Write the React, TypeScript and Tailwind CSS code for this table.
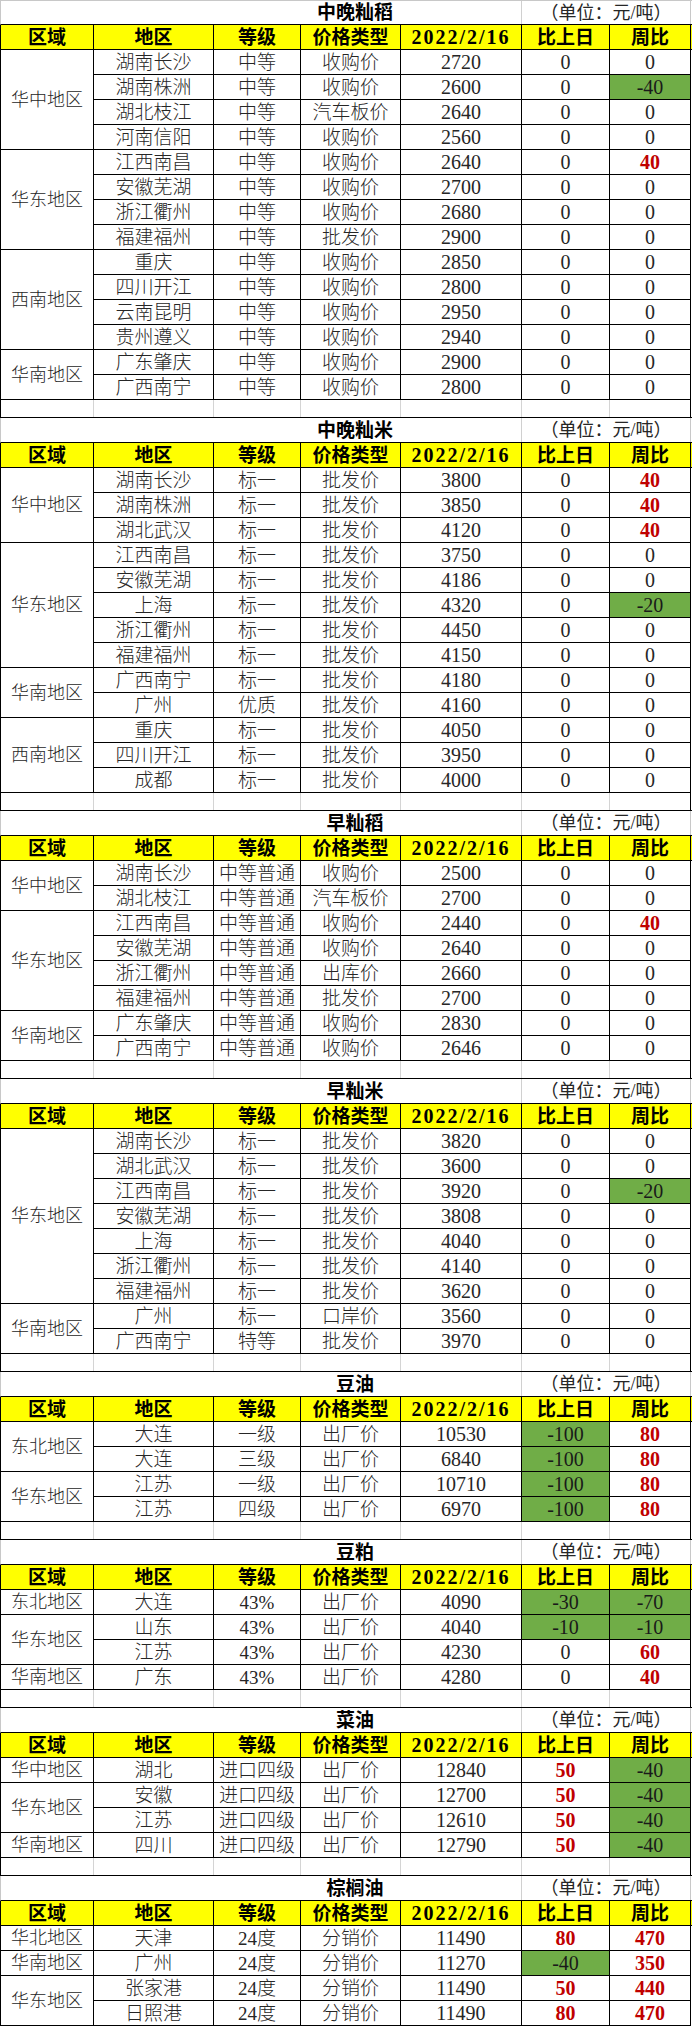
// 农产品价格日报表：8 个品种，每个品种一张小表
type Row = [string, string, string, string, string, string];

interface Group {
  region: string;
  rows: Row[];
}

interface Section {
  title: string;
  groups: Group[];
}

// "r" 前缀 = 红字上涨，"g" 前缀 = 绿底下跌
const SECTIONS: Section[] = [
  {
    title: "中晚籼稻",
    groups: [
      {
        region: "华中地区",
        rows: [
          ["湖南长沙", "中等", "收购价", "2720", "0", "0"],
          ["湖南株洲", "中等", "收购价", "2600", "0", "g-40"],
          ["湖北枝江", "中等", "汽车板价", "2640", "0", "0"],
          ["河南信阳", "中等", "收购价", "2560", "0", "0"],
        ],
      },
      {
        region: "华东地区",
        rows: [
          ["江西南昌", "中等", "收购价", "2640", "0", "r40"],
          ["安徽芜湖", "中等", "收购价", "2700", "0", "0"],
          ["浙江衢州", "中等", "收购价", "2680", "0", "0"],
          ["福建福州", "中等", "批发价", "2900", "0", "0"],
        ],
      },
      {
        region: "西南地区",
        rows: [
          ["重庆", "中等", "收购价", "2850", "0", "0"],
          ["四川开江", "中等", "收购价", "2800", "0", "0"],
          ["云南昆明", "中等", "收购价", "2950", "0", "0"],
          ["贵州遵义", "中等", "收购价", "2940", "0", "0"],
        ],
      },
      {
        region: "华南地区",
        rows: [
          ["广东肇庆", "中等", "收购价", "2900", "0", "0"],
          ["广西南宁", "中等", "收购价", "2800", "0", "0"],
        ],
      },
    ],
  },
  {
    title: "中晚籼米",
    groups: [
      {
        region: "华中地区",
        rows: [
          ["湖南长沙", "标一", "批发价", "3800", "0", "r40"],
          ["湖南株洲", "标一", "批发价", "3850", "0", "r40"],
          ["湖北武汉", "标一", "批发价", "4120", "0", "r40"],
        ],
      },
      {
        region: "华东地区",
        rows: [
          ["江西南昌", "标一", "批发价", "3750", "0", "0"],
          ["安徽芜湖", "标一", "批发价", "4186", "0", "0"],
          ["上海", "标一", "批发价", "4320", "0", "g-20"],
          ["浙江衢州", "标一", "批发价", "4450", "0", "0"],
          ["福建福州", "标一", "批发价", "4150", "0", "0"],
        ],
      },
      {
        region: "华南地区",
        rows: [
          ["广西南宁", "标一", "批发价", "4180", "0", "0"],
          ["广州", "优质", "批发价", "4160", "0", "0"],
        ],
      },
      {
        region: "西南地区",
        rows: [
          ["重庆", "标一", "批发价", "4050", "0", "0"],
          ["四川开江", "标一", "批发价", "3950", "0", "0"],
          ["成都", "标一", "批发价", "4000", "0", "0"],
        ],
      },
    ],
  },
  {
    title: "早籼稻",
    groups: [
      {
        region: "华中地区",
        rows: [
          ["湖南长沙", "中等普通", "收购价", "2500", "0", "0"],
          ["湖北枝江", "中等普通", "汽车板价", "2700", "0", "0"],
        ],
      },
      {
        region: "华东地区",
        rows: [
          ["江西南昌", "中等普通", "收购价", "2440", "0", "r40"],
          ["安徽芜湖", "中等普通", "收购价", "2640", "0", "0"],
          ["浙江衢州", "中等普通", "出库价", "2660", "0", "0"],
          ["福建福州", "中等普通", "批发价", "2700", "0", "0"],
        ],
      },
      {
        region: "华南地区",
        rows: [
          ["广东肇庆", "中等普通", "收购价", "2830", "0", "0"],
          ["广西南宁", "中等普通", "收购价", "2646", "0", "0"],
        ],
      },
    ],
  },
  {
    title: "早籼米",
    groups: [
      {
        region: "华东地区",
        rows: [
          ["湖南长沙", "标一", "批发价", "3820", "0", "0"],
          ["湖北武汉", "标一", "批发价", "3600", "0", "0"],
          ["江西南昌", "标一", "批发价", "3920", "0", "g-20"],
          ["安徽芜湖", "标一", "批发价", "3808", "0", "0"],
          ["上海", "标一", "批发价", "4040", "0", "0"],
          ["浙江衢州", "标一", "批发价", "4140", "0", "0"],
          ["福建福州", "标一", "批发价", "3620", "0", "0"],
        ],
      },
      {
        region: "华南地区",
        rows: [
          ["广州", "标一", "口岸价", "3560", "0", "0"],
          ["广西南宁", "特等", "批发价", "3970", "0", "0"],
        ],
      },
    ],
  },
  {
    title: "豆油",
    groups: [
      {
        region: "东北地区",
        rows: [
          ["大连", "一级", "出厂价", "10530", "g-100", "r80"],
          ["大连", "三级", "出厂价", "6840", "g-100", "r80"],
        ],
      },
      {
        region: "华东地区",
        rows: [
          ["江苏", "一级", "出厂价", "10710", "g-100", "r80"],
          ["江苏", "四级", "出厂价", "6970", "g-100", "r80"],
        ],
      },
    ],
  },
  {
    title: "豆粕",
    groups: [
      { region: "东北地区", rows: [["大连", "43%", "出厂价", "4090", "g-30", "g-70"]] },
      {
        region: "华东地区",
        rows: [
          ["山东", "43%", "出厂价", "4040", "g-10", "g-10"],
          ["江苏", "43%", "出厂价", "4230", "0", "r60"],
        ],
      },
      { region: "华南地区", rows: [["广东", "43%", "出厂价", "4280", "0", "r40"]] },
    ],
  },
  {
    title: "菜油",
    groups: [
      { region: "华中地区", rows: [["湖北", "进口四级", "出厂价", "12840", "r50", "g-40"]] },
      {
        region: "华东地区",
        rows: [
          ["安徽", "进口四级", "出厂价", "12700", "r50", "g-40"],
          ["江苏", "进口四级", "出厂价", "12610", "r50", "g-40"],
        ],
      },
      { region: "华南地区", rows: [["四川", "进口四级", "出厂价", "12790", "r50", "g-40"]] },
    ],
  },
  {
    title: "棕榈油",
    groups: [
      { region: "华北地区", rows: [["天津", "24度", "分销价", "11490", "r80", "r470"]] },
      { region: "华南地区", rows: [["广州", "24度", "分销价", "11270", "g-40", "r350"]] },
      {
        region: "华东地区",
        rows: [
          ["张家港", "24度", "分销价", "11490", "r50", "r440"],
          ["日照港", "24度", "分销价", "11490", "r80", "r470"],
        ],
      },
    ],
  },
];

const HEAD = ["区域", "地区", "等级", "价格类型", "2022/2/16", "比上日", "周比"];

// 列宽（含右边框），总宽 690 + 左边框 1
const COLS = ["w-[93px]", "w-[120px]", "w-[87px]", "w-[100px]", "w-[121px]", "w-[88px]", "w-[81px]"];

const cell = "shrink-0 border-r border-black flex items-center justify-center leading-none";

function ValueCell({ v, w }: { v: string; w: string }) {
  if (v.startsWith("g")) {
    return (
      <div className={`${w} ${cell} bg-[#70AD47] text-[20px] text-[#1a1a1a]`}>{v.slice(1)}</div>
    );
  }
  if (v.startsWith("r")) {
    return (
      <div className={`${w} ${cell} text-[20px] font-bold text-[#C00000]`}>{v.slice(1)}</div>
    );
  }
  return <div className={`${w} ${cell} text-[20px] text-[#262626]`}>{v}</div>;
}

function Table({ s, first, last }: { s: Section; first: boolean; last: boolean }) {
  return (
    <div>
      {/* 标题行 */}
      <div
        className={`flex h-[25px] border-b border-l border-b-black border-l-[#c8c8c8] ${
          first ? "border-t border-t-[#c8c8c8]" : ""
        }`}
      >
        <div className="w-[521px] shrink-0 border-r border-[#d0d0d0] flex items-center justify-center pl-[188px] text-[19px] font-bold text-black leading-none">
          {s.title}
        </div>
        <div className="w-[169px] shrink-0 border-r border-[#c8c8c8] flex items-center justify-center text-[18px] text-[#262626] leading-none">
          （单位：元/吨）
        </div>
      </div>

      {/* 表头 */}
      <div className="flex h-[25px] border-b border-l border-black bg-[#FFFF00]">
        {HEAD.map((h, i) => (
          <div
            key={h}
            className={`${COLS[i]} ${cell} font-bold text-black ${
              i === 4 ? "text-[20px] tracking-[2px]" : "text-[19px]"
            }`}
          >
            {h}
          </div>
        ))}
      </div>

      {/* 数据 */}
      {s.groups.map((g, gi) => (
        <div key={gi} className="flex border-l border-black">
          <div className={`${COLS[0]} ${cell} border-b text-[18px] font-light text-[#262626]`}>
            {g.region}
          </div>
          <div className="flex flex-col">
            {g.rows.map((r, ri) => (
              <div key={ri} className="flex h-[25px] border-b border-black">
                <div className={`${COLS[1]} ${cell} text-[19px] font-light text-[#262626]`}>{r[0]}</div>
                <div className={`${COLS[2]} ${cell} text-[19px] font-light text-[#262626]`}>{r[1]}</div>
                <div className={`${COLS[3]} ${cell} text-[19px] font-light text-[#262626]`}>{r[2]}</div>
                <div className={`${COLS[4]} ${cell} text-[20px] text-[#262626]`}>{r[3]}</div>
                <ValueCell v={r[4]} w={COLS[5]} />
                <ValueCell v={r[5]} w={COLS[6]} />
              </div>
            ))}
          </div>
        </div>
      ))}

      {/* 表间空行 */}
      {!last && (
        <div className="flex h-[18px] border-b border-l border-black">
          {COLS.map((w, i) => (
            <div key={i} className={`${w} shrink-0 border-r ${i === 6 ? "border-black" : "border-[#d4d4d4]"}`} />
          ))}
        </div>
      )}
    </div>
  );
}

export default function App() {
  return (
    <div
      className="w-[692px] bg-white"
      style={{ fontFamily: '"Liberation Serif", "Noto Sans CJK SC", serif' }}
    >
      {SECTIONS.map((s, i) => (
        <Table key={s.title} s={s} first={i === 0} last={i === SECTIONS.length - 1} />
      ))}
    </div>
  );
}
